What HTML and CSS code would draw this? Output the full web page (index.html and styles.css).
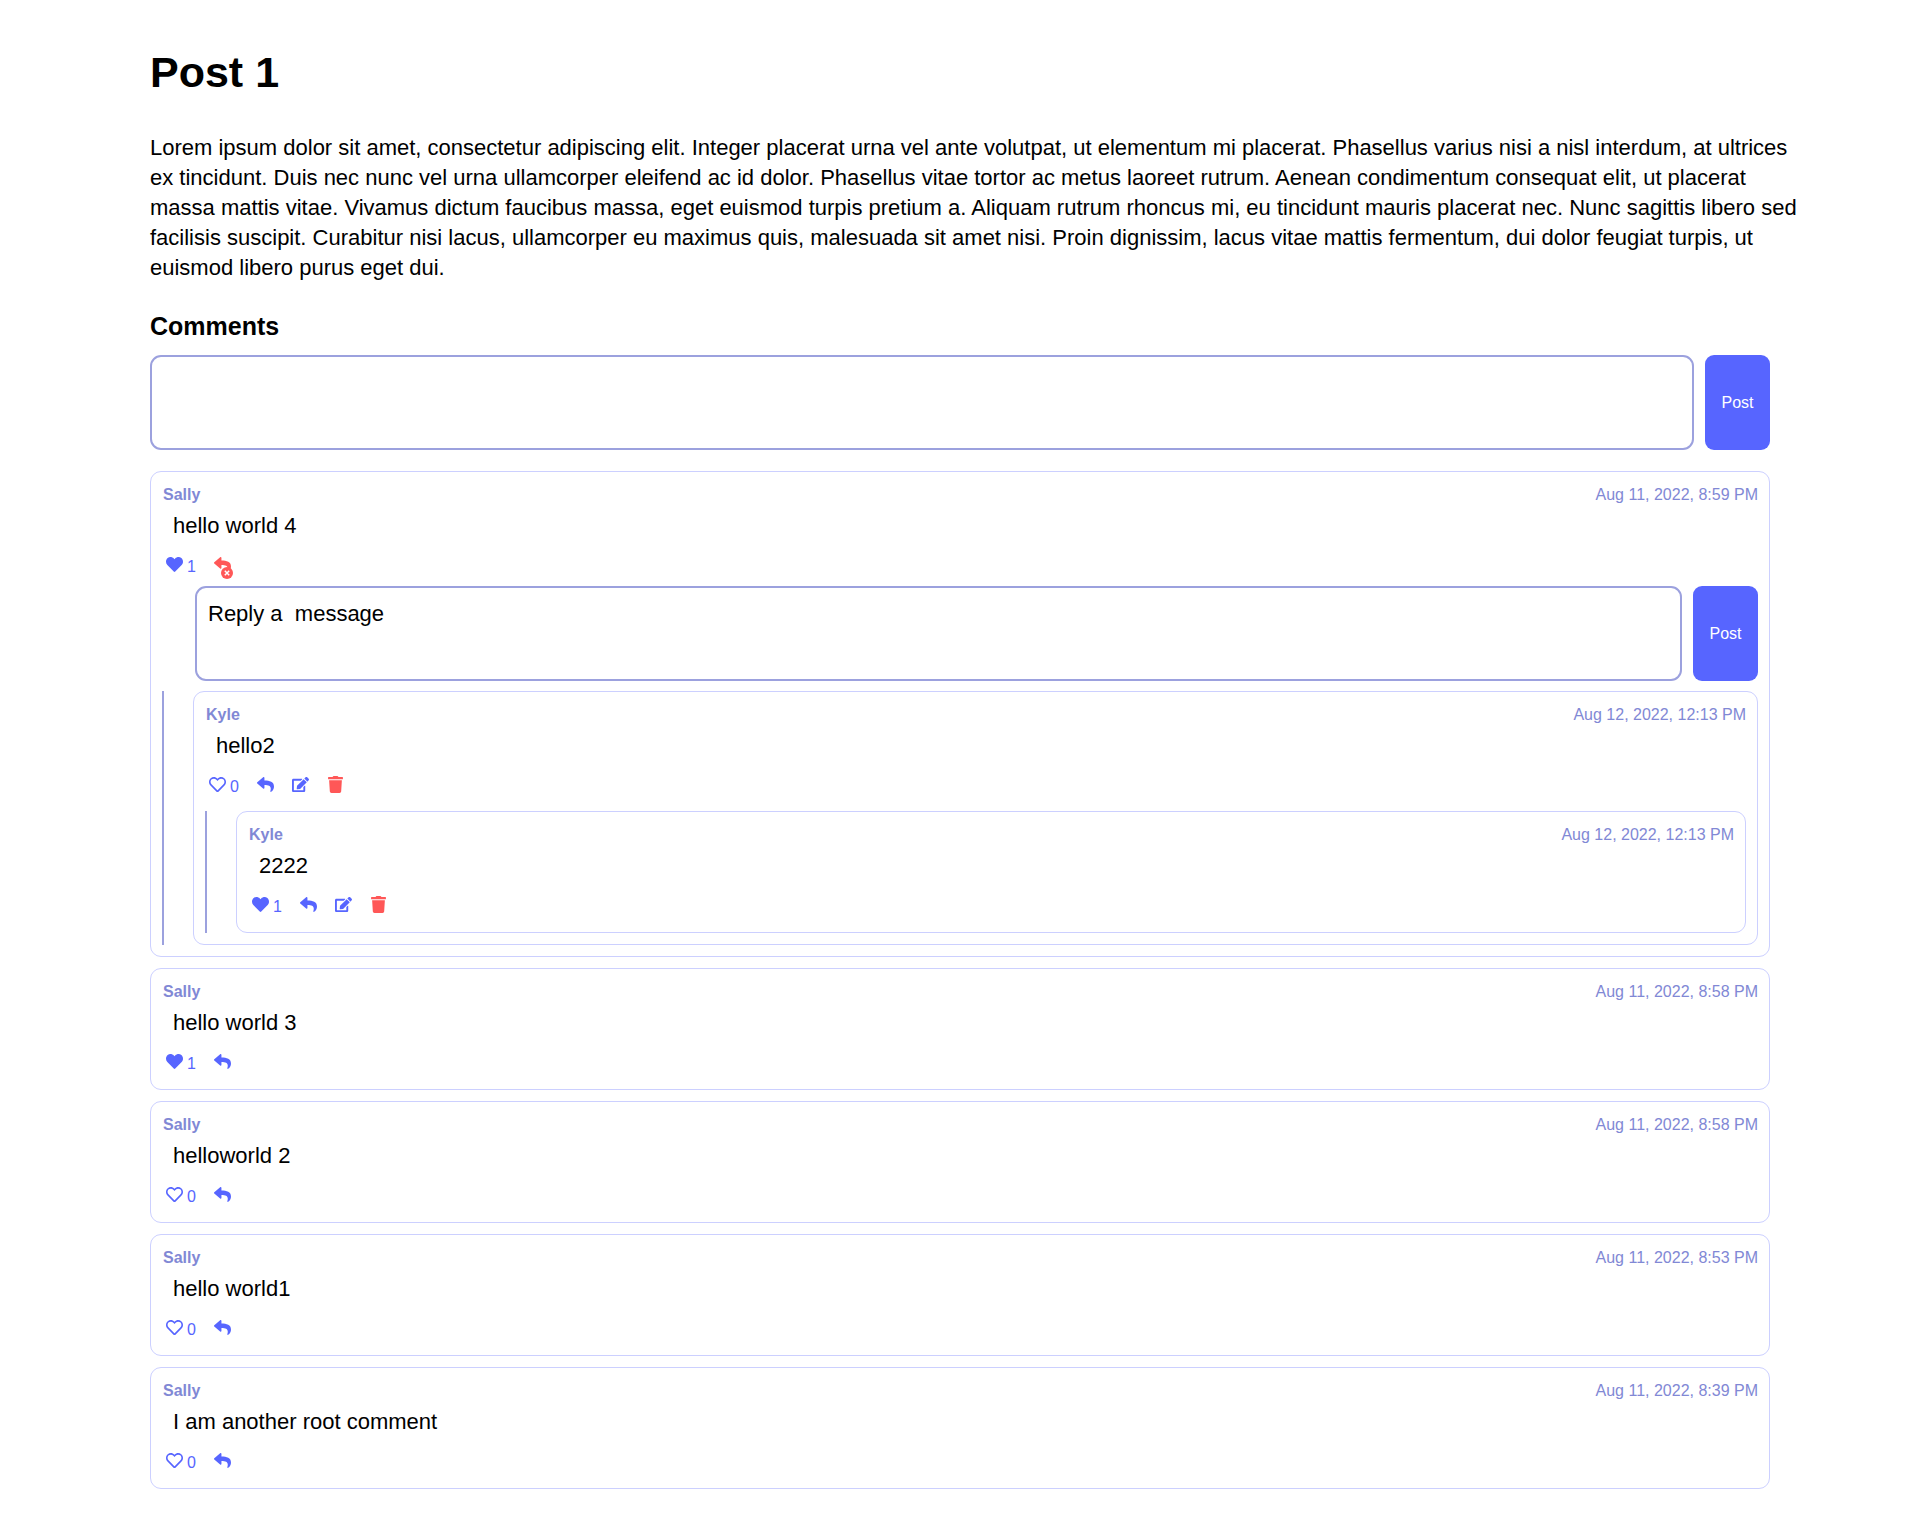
FILE: index.html
```html
<!DOCTYPE html>
<html lang="en">
<head>
<meta charset="utf-8">
<meta name="viewport" content="width=device-width, initial-scale=1">
<title>Post 1</title>
<link rel="stylesheet" href="styles.css">
</head>
<body>
<svg class="sprite" aria-hidden="true">
  <symbol id="heart" viewBox="0 0 512 512"><path d="M462.3 62.6C407.5 15.9 326 24.3 275.7 76.2L256 96.5l-19.7-20.3C186.1 24.3 104.5 15.9 49.7 62.6c-62.8 53.6-66.1 149.8-9.9 207.9l193.5 199.8c12.5 12.9 32.8 12.9 45.3 0l193.5-199.8c56.3-58.1 53-154.3-9.8-207.9z"/></symbol>
  <symbol id="heart-outline" viewBox="0 0 512 512"><path d="M458.4 64.3C400.6 15.7 311.3 23 256 79.3 200.7 23 111.4 15.6 53.6 64.3-21.6 127.6-10.6 230.8 43 285.5l175.4 178.7c10 10.2 23.4 15.9 37.6 15.9 14.3 0 27.6-5.6 37.6-15.8L469 285.6c53.5-54.7 64.7-157.9-10.6-221.3zm-23.6 187.5L259.4 430.5c-2.4 2.4-4.4 2.4-6.8 0L77.2 251.8c-36.5-37.2-43.9-107.6 7.3-150.7 38.9-32.7 98.9-27.8 136.5 10.5l35 35.7 35-35.7c37.8-38.5 97.8-43.2 136.5-10.6 51.1 43.1 43.5 113.9 7.3 150.8z"/></symbol>
  <symbol id="reply" viewBox="0 0 512 512"><path d="M8.309 189.836L184.313 37.851C199.719 24.546 224 35.347 224 56.015v80.053c160.629 1.839 288 34.032 288 186.258 0 61.441-39.581 122.309-83.333 154.132-13.653 9.931-33.111-2.533-28.077-18.631 45.344-145.012-21.507-183.51-176.59-185.742V360c0 20.7-24.3 31.453-39.687 18.164l-176.004-152c-11.071-9.562-11.086-26.753 0-36.328z"/></symbol>
  <symbol id="edit" viewBox="0 0 576 512"><path d="M402.6 83.2l90.2 90.2c3.8 3.8 3.8 10 0 13.8L274.4 405.6l-92.8 10.3c-12.4 1.4-22.9-9.1-21.5-21.5l10.3-92.8L388.8 83.2c3.8-3.8 10-3.8 13.8 0zm162-22.9l-48.8-48.8c-15.2-15.2-39.9-15.2-55.2 0l-35.4 35.4c-3.8 3.8-3.8 10 0 13.8l90.2 90.2c3.8 3.8 10 3.8 13.8 0l35.4-35.4c15.2-15.3 15.2-40 0-55.2zM384 346.2V448H64V128h229.8c3.2 0 6.2-1.3 8.5-3.5l40-40c7.6-7.6 2-20.5-8.5-20.5H48C21.5 64 0 85.5 0 112v352c0 26.5 21.5 48 48 48h352c26.5 0 48-21.5 48-48V306.2c0-10.7-12.9-16-20.5-8.5l-40 40c-2.2 2.3-3.5 5.3-3.5 8.5z"/></symbol>
  <symbol id="trash" viewBox="0 0 448 512"><path d="M432 32H312l-9.4-18.7A24 24 0 0 0 281.1 0H166.8a23.72 23.72 0 0 0-21.4 13.3L136 32H16A16 16 0 0 0 0 48v32a16 16 0 0 0 16 16h416a16 16 0 0 0 16-16V48a16 16 0 0 0-16-16zM32 128l21.2 339a48 48 0 0 0 47.9 45h245.8a48 48 0 0 0 47.9-45L416 128z"/></symbol>
  <symbol id="cancel" viewBox="0 0 12 12"><circle cx="6" cy="6" r="6"/><path d="M3.800 3.800l4.400 4.400M8.200 3.800l-4.400 4.400" stroke="#fff" stroke-width="1.500"/></symbol>
</svg>
<main class="container">
  <h1 class="title">Post 1</h1>
  <article class="post-body">Lorem ipsum dolor sit amet, consectetur adipiscing elit. Integer placerat urna vel ante volutpat, ut elementum mi placerat. Phasellus varius nisi a nisl interdum, at ultrices ex tincidunt. Duis nec nunc vel urna ullamcorper eleifend ac id dolor. Phasellus vitae tortor ac metus laoreet rutrum. Aenean condimentum consequat elit, ut placerat massa mattis vitae. Vivamus dictum faucibus massa, eget euismod turpis pretium a. Aliquam rutrum rhoncus mi, eu tincidunt mauris placerat nec. Nunc sagittis libero sed facilisis suscipit. Curabitur nisi lacus, ullamcorper eu maximus quis, malesuada sit amet nisi. Proin dignissim, lacus vitae mattis fermentum, dui dolor feugiat turpis, ut euismod libero purus eget dui.</article>
  <h3 class="comments-title">Comments</h3>
  <form class="comment-form">
    <textarea class="message-input" aria-label="Comment"></textarea>
    <button class="btn" type="button">Post</button>
  </form>

  <section class="comment-list">
    <div class="comment">
      <div class="header"><span class="name">Sally</span><span class="date">Aug 11, 2022, 8:59 PM</span></div>
      <div class="message">hello world 4</div>
      <div class="footer">
        <button class="icon-btn" type="button" aria-label="Unlike"><svg class="icon"><use href="#heart"/></svg><span class="count">1</span></button>
        <button class="icon-btn danger" type="button" aria-label="Cancel reply"><svg class="icon"><use href="#reply"/></svg><svg class="badge"><use href="#cancel"/></svg></button>
      </div>
      <form class="comment-form reply-form">
        <textarea class="message-input" aria-label="Reply">Reply a  message</textarea>
        <button class="btn" type="button">Post</button>
      </form>
      <div class="replies">
        <button class="collapse-line" type="button" aria-label="Hide replies"></button>
        <div class="comment">
          <div class="header"><span class="name">Kyle</span><span class="date">Aug 12, 2022, 12:13 PM</span></div>
          <div class="message">hello2</div>
          <div class="footer">
            <button class="icon-btn" type="button" aria-label="Like"><svg class="icon"><use href="#heart-outline"/></svg><span class="count">0</span></button>
            <button class="icon-btn" type="button" aria-label="Reply"><svg class="icon"><use href="#reply"/></svg></button>
            <button class="icon-btn" type="button" aria-label="Edit"><svg class="icon"><use href="#edit"/></svg></button>
            <button class="icon-btn danger" type="button" aria-label="Delete"><svg class="icon"><use href="#trash"/></svg></button>
          </div>
          <div class="replies">
            <button class="collapse-line" type="button" aria-label="Hide replies"></button>
            <div class="comment">
              <div class="header"><span class="name">Kyle</span><span class="date">Aug 12, 2022, 12:13 PM</span></div>
              <div class="message">2222</div>
              <div class="footer">
                <button class="icon-btn" type="button" aria-label="Unlike"><svg class="icon"><use href="#heart"/></svg><span class="count">1</span></button>
                <button class="icon-btn" type="button" aria-label="Reply"><svg class="icon"><use href="#reply"/></svg></button>
                <button class="icon-btn" type="button" aria-label="Edit"><svg class="icon"><use href="#edit"/></svg></button>
                <button class="icon-btn danger" type="button" aria-label="Delete"><svg class="icon"><use href="#trash"/></svg></button>
              </div>
            </div>
          </div>
        </div>
      </div>
    </div>

    <div class="comment">
      <div class="header"><span class="name">Sally</span><span class="date">Aug 11, 2022, 8:58 PM</span></div>
      <div class="message">hello world 3</div>
      <div class="footer">
        <button class="icon-btn" type="button" aria-label="Unlike"><svg class="icon"><use href="#heart"/></svg><span class="count">1</span></button>
        <button class="icon-btn" type="button" aria-label="Reply"><svg class="icon"><use href="#reply"/></svg></button>
      </div>
    </div>

    <div class="comment">
      <div class="header"><span class="name">Sally</span><span class="date">Aug 11, 2022, 8:58 PM</span></div>
      <div class="message">helloworld 2</div>
      <div class="footer">
        <button class="icon-btn" type="button" aria-label="Like"><svg class="icon"><use href="#heart-outline"/></svg><span class="count">0</span></button>
        <button class="icon-btn" type="button" aria-label="Reply"><svg class="icon"><use href="#reply"/></svg></button>
      </div>
    </div>

    <div class="comment">
      <div class="header"><span class="name">Sally</span><span class="date">Aug 11, 2022, 8:53 PM</span></div>
      <div class="message">hello world1</div>
      <div class="footer">
        <button class="icon-btn" type="button" aria-label="Like"><svg class="icon"><use href="#heart-outline"/></svg><span class="count">0</span></button>
        <button class="icon-btn" type="button" aria-label="Reply"><svg class="icon"><use href="#reply"/></svg></button>
      </div>
    </div>

    <div class="comment">
      <div class="header"><span class="name">Sally</span><span class="date">Aug 11, 2022, 8:39 PM</span></div>
      <div class="message">I am another root comment</div>
      <div class="footer">
        <button class="icon-btn" type="button" aria-label="Like"><svg class="icon"><use href="#heart-outline"/></svg><span class="count">0</span></button>
        <button class="icon-btn" type="button" aria-label="Reply"><svg class="icon"><use href="#reply"/></svg></button>
      </div>
    </div>
  </section>
</main>
</body>
</html>
```
FILE: styles.css
```css
*, *::before, *::after {
  box-sizing: border-box;
}

body {
  margin: 0;
  background: #fff;
  color: #000;
  font-family: Arial, "Liberation Sans", sans-serif;
  font-size: 22px;
  line-height: 30px;
}

button {
  border: none;
  padding: 0;
  background: none;
  font: inherit;
  cursor: pointer;
}

.sprite {
  display: none;
}

.container {
  max-width: 1700px;
  margin: 0 auto;
  padding: 46px 40px 43px;
}

.title {
  margin: 0 0 35px;
  font-size: 43px;
  line-height: 52px;
}

/* The text column runs slightly into the page gutter. */
.post-body {
  margin-right: -34px;
}

.comments-title {
  margin: 28px 0 14px;
  font-size: 25px;
  line-height: 30px;
}

.comment-form {
  display: flex;
  gap: 11px;
}

.message-input {
  flex: 1;
  height: 95px;
  padding: 11px;
  border: 2px solid hsl(235, 50%, 74%);
  border-radius: 11px;
  background: #fff;
  color: inherit;
  font: inherit;
  resize: none;
}

.btn {
  width: 65px;
  border-radius: 9px;
  background: hsl(235, 100%, 67%);
  color: #fff;
  font-size: 16px;
}

.comment-list {
  display: flex;
  flex-direction: column;
  gap: 11px;
  margin-top: 21px;
}

.comment {
  flex: 1;
  padding: 11px;
  border: 1px solid hsl(235, 100%, 90%);
  border-radius: 11px;
}

.header {
  display: flex;
  justify-content: space-between;
  margin-bottom: 4px;
  padding-left: 1px;
  color: hsl(235, 50%, 67%);
  font-size: 16px;
  line-height: 24px;
}

.name {
  font-weight: bold;
}

.message {
  margin: 0 11px;
}

.footer {
  display: flex;
  gap: 18px;
  margin-top: 12px;
  padding-left: 4px;
}

.icon-btn {
  position: relative;
  display: flex;
  gap: 4px;
  height: 28px;
  padding-top: 3px;
  color: hsl(235, 100%, 67%);
  font-size: 16px;
  line-height: 22px;
}

.icon {
  width: 17px;
  height: 17px;
  fill: currentColor;
}

.danger {
  color: hsl(0, 100%, 67%);
}

.badge {
  position: absolute;
  left: 7px;
  top: 14px;
  width: 12px;
  height: 12px;
  fill: currentColor;
}

.reply-form {
  margin: 5px 0 0 33px;
}

.replies {
  display: flex;
  gap: 29px;
  margin-top: 10px;
}

.collapse-line {
  width: 2px;
  background: hsl(235, 50%, 74%);
}
```
